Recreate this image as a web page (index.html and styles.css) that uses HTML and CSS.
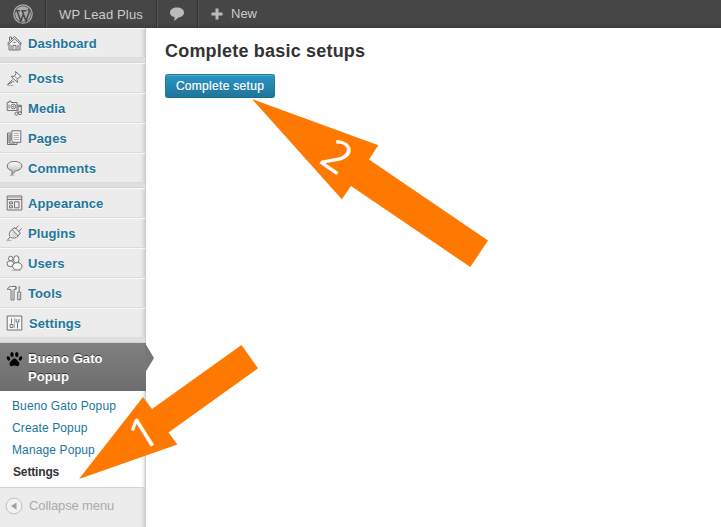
FILE: index.html
```html
<!DOCTYPE html>
<html lang="en">
<head>
<meta charset="utf-8">
<title>Complete basic setups</title>
<link rel="stylesheet" href="styles.css">
</head>
<body>
<header class="bar">
  <a class="bar-item logo"><svg width="20" height="20" viewBox="0 0 20 20"><circle cx="10" cy="10" r="9.2" fill="none" stroke="#aaa" stroke-width="1.3"/><circle cx="10" cy="10" r="7.8" fill="#aaa"/><path d="M2.5 6.7h4.6M8.4 6.7h5M4 6.7l3.8 10.5L10.4 10M9.3 6.900l3.700 10.200 3.200-9c.4-1.500-.8-2-1-3.200" fill="none" stroke="#464646" stroke-width="1.5"/></svg></a>
  <a class="bar-item site">WP Lead Plus</a>
  <a class="bar-item talk"><svg width="16" height="16" viewBox="0 0 16 16"><path d="M8 1.500c4 0 7 2 7 5s-2.600 4.800-5.500 5L5.300 15l.2-3.900C2.700 10.500 1 9 1 6.500c0-3 3-5 7-5z" fill="#bbb"/></svg></a>
  <a class="bar-item new"><svg width="12" height="12" viewBox="0 0 12 12"><path d="M4.500 .5h3v4h4v3h-4v4h-3v-4h-4v-3h4z" fill="#bbb"/></svg>New</a>
</header>
<div class="layout">
  <nav class="menu">
    <a class="row"><svg class="ico" viewBox="0 0 16 16"><path d="M2.500 8v7h11V8M.8 8.500L8 1.500l7.200 7M3 5.500V2h2v2M1.200 10L8 3.800l6.800 6.200M6.500 15v-4.500h3V15M7 7.500h2M4.500 10v4M11.500 10v4"/></svg><span>Dashboard</span></a>
    <div class="sep"></div>
    <a class="row"><svg class="ico" viewBox="0 0 16 16"><path class="shade" d="M9 1.500l5.700 5.200-2 .4-2 2.300.2 3-6.300-6 3.200-.1 1.700-2.600z"/><path d="M6 9.500l-5 5.200 6.500-3.700M8.500 6.500l2.400 2.400"/><path class="lite" d="M1 15.500h6"/></svg><span>Posts</span></a>
    <a class="row"><svg class="ico" viewBox="0 0 16 16"><path class="shade" d="M.7 2.500h1.800V1.200h2v1.300h6v8H.7z"/><path d="M10.500 5.200h4.300v8M11.500 7v6.500M14.500 6.500h-3"/><circle cx="6.800" cy="6.500" r="2.400"/><circle cx="6.800" cy="6.500" r=".7"/><circle cx="10" cy="13.700" r="1.500"/><circle cx="13.500" cy="13.200" r="1.500"/><path d="M2.500 4.500v4"/></svg><span>Media</span></a>
    <a class="row"><svg class="ico" viewBox="0 0 16 16"><path d="M4.500 3H1v11.500h9.500v-2M2.500 4.500V13h6M3.700 4v7.700"/><path class="shade" d="M5.300.8h9v11.500H6.800l-1.500-2z"/><path class="lite" d="M7 3.500h5.500M7 5.500h5.500M7 7.500h5.500M7 9.500h5.500"/></svg><span>Pages</span></a>
    <a class="row"><svg class="ico" viewBox="0 0 16 16"><defs><linearGradient id="bubble" x2="0" y2="1"><stop stop-color="#fff"/><stop offset="1" stop-color="#b0b0b0"/></linearGradient></defs><path d="M8 1.500c4.200 0 7.300 1.700 7.300 4.500S12.500 10.500 9 10.700c-1 1.500-2.300 3.300-4 3.800.6-1.200.6-2.500.3-4C2.500 10 .8 8.500.8 6 .8 3.200 3.800 1.500 8 1.500z" fill="url(#bubble)"/><path class="lite" d="M3 15.300h5"/></svg><span>Comments</span></a>
    <div class="sep"></div>
    <a class="row"><svg class="ico" viewBox="0 0 16 16"><path d="M.7 1h14.600v14H.7zM.7 4.500h14.600M3 6.800h3v2H3zM3 10.800h3v2H3zM8 6.800h4.500v6H8z"/><path class="lite" d="M1.500 2.700h13"/></svg><span>Appearance</span></a>
    <a class="row"><svg class="ico" viewBox="0 0 16 16"><path class="shade" d="M5.500 4.500l6.200 6.500c-2.200 2.200-5.200 2.500-7.200 1.500l-1.200-1.300c-1-2-.4-4.600 2.200-6.700z"/><path d="M5.500 4.500l3-2 5.300 5.500-2.100 3M8.500 4l3.500-3.200M11.500 7l3.800-3.500M3.700 12L.8 15.300"/><path class="lite" d="M5.500 6.500l4 4.500M4.500 8.500l3.500 3.500M0 15.500h5"/></svg><span>Plugins</span></a>
    <a class="row"><svg class="ico" viewBox="0 0 16 16"><g class="shade"><circle cx="4.200" cy="3.500" r="2.200"/><ellipse cx="3.800" cy="8.700" rx="3.300" ry="2.900"/><ellipse cx="9.800" cy="4.300" rx="2.700" ry="3.600"/><ellipse cx="10.800" cy="11.300" rx="4.800" ry="3.700"/></g><path class="lite" d="M5 15.600h9"/></svg><span>Users</span></a>
    <a class="row"><svg class="ico" viewBox="0 0 16 16"><path class="shade" d="M.8 4.500c.7-2 2-3 4-3h4.700v2.800H7.500V15h-3V4.500c-1.500-.4-2.700-.4-3.700 0zM11.200 7.200h3v7.500h-3z"/><path d="M12.700 1v6M9.500 2v2"/><path class="lite" d="M6 5v9M12.700 9v5"/></svg><span>Tools</span></a>
    <a class="row settings"><svg class="ico" viewBox="0 0 16 16"><path class="shade" d="M.7 1h14.600v14H.7z"/><path d="M5 3.500v5M3.600 9.500h2.800v3H3.600zM11 8v5.500M9.600 4v3h2.800V4"/><path class="lite" d="M8 3v10"/></svg><span>Settings</span></a>
    <div class="sep"></div>
    <a class="row current"><svg class="paw" viewBox="0 0 16 16"><ellipse cx="5.500" cy="3.500" rx="1.700" ry="2.600"/><ellipse cx="10.300" cy="3.500" rx="1.700" ry="2.600"/><ellipse cx="2" cy="7.400" rx="1.600" ry="2.300" transform="rotate(-25 2 7.400)"/><ellipse cx="14" cy="7.400" rx="1.600" ry="2.300" transform="rotate(25 14 7.400)"/><path d="M8 7.500c2 0 2.500 2 4 3.300 1.600 1.500 1 4.400-1.200 4.400-1.200 0-1.800-.6-2.800-.6s-1.600.6-2.800.6C3 15.200 2.400 12.300 4 10.800c1.500-1.300 2-3.300 4-3.300z"/></svg><span>Bueno Gato Popup</span><i class="nose"></i></a>
    <div class="sub"><a>Bueno Gato Popup</a><a>Create Popup</a><a>Manage Popup</a><a class="on">Settings</a></div>
    <a class="collapse"><svg width="18" height="18" viewBox="0 0 18 18"><circle cx="9" cy="9" r="7.900" fill="#f2f2f2" stroke="#c0c0c0"/><path d="M11.500 5.500v7L6 9z" fill="#a0a0a0"/></svg><span>Collapse menu</span></a>
  </nav>
  <main class="content">
    <h1>Complete basic setups</h1>
    <button class="primary">Complete setup</button>
  </main>
</div>
<svg class="notes" width="721" height="527" viewBox="0 0 721 527">
  <path d="M252 99L378.300 145.300 369 159.500 488 240.500 470.300 267 351 186 341.800 199.300z"/>
  <path d="M79 479L143 397 152 409 241.500 345 258 368.300 168.500 432.500 177.300 444.500z"/>
  <text transform="translate(318 162) rotate(35)">2</text>
  <text transform="translate(141 453) rotate(-32)">1</text>
</svg>
</body>
</html>
```
FILE: styles.css
```css
* { box-sizing: border-box; }
body { margin: 0; width: 721px; height: 527px; overflow: hidden; position: relative; background: #fff; font-family: "Liberation Sans", Arial, sans-serif; color: #333; }
.bar { display: flex; height: 28px; background: linear-gradient(#464646 80%, #3d3d3d); color: #ccc; font-size: 13px; line-height: 28px; }
.bar-item { display: flex; align-items: center; border-right: 1px solid #333; box-shadow: 1px 0 #555; }
.logo { width: 46px; padding-left: 13px; }
.site { width: 111px; padding: 1px 0 0 13px; letter-spacing: .15px; }
.talk { width: 41px; padding-left: 12px; }
.new { border: 0; box-shadow: none; padding-left: 13px; gap: 8px; }
.layout { display: flex; height: 499px; }
.menu { width: 146px; background: #ececec; box-shadow: inset -5px 0 4px -4px #c4c4c4; border-right: 1px solid #ccc; }
.row { display: flex; height: 30px; padding: 8px 0 0 6px; border-bottom: 1px solid #dadada; box-shadow: inset 0 1px #f9f9f9; font-size: 13px; font-weight: bold; line-height: 16px; letter-spacing: .1px; color: #21759b; text-shadow: 0 1px #fff; }
.ico { flex: none; width: 17px; height: 16px; margin: -1px 5px 0 0; fill: none; stroke: #707070; stroke-width: 1; }
.lite { stroke: #b4b4b4; }
.shade { fill: #f6f6f6; }
.settings span { margin-left: 1px; }
.sep { height: 5px; background: #dfdfdf; border-bottom: 1px solid #d2d2d2; }
.current { position: relative; height: 48px; padding-top: 7px; line-height: 18px; color: #fff; background: linear-gradient(#808080, #6d6d6d); border: 0; box-shadow: none; text-shadow: 0 -1px #333; width: 146px; }
.current span { width: 90px; }
.paw { flex: none; width: 17px; height: 16px; margin: 1px 5px 0 0; fill: #000; }
.nose { position: absolute; left: 145px; top: 0; width: 9px; height: 30px; background: #777; clip-path: polygon(0 0, 100% 50%, 0 100%); }
.sub { height: 97px; padding: 4px 0 0 12px; background: #fff; border-bottom: 1px solid #d4d4d4; box-shadow: inset -4px 0 4px -4px #bbb; font-size: 12px; line-height: 22px; color: #21759b; }
.sub a { display: block; letter-spacing: .12px; }
.sub .on { margin-left: 1px; font-weight: bold; color: #333; letter-spacing: -.15px; }
.collapse { display: flex; align-items: center; height: 35px; padding-left: 5px; gap: 6px; font-size: 13px; letter-spacing: -.12px; color: #aaa; }
.content { padding: 13px 0 0 19px; }
h1 { margin: 0; font-size: 18px; line-height: 20px; letter-spacing: .2px; }
.primary { display: block; width: 110px; height: 24px; margin-top: 13px; padding: 0; border: 1px solid #21759b; border-bottom-color: #1e6a8d; border-radius: 3px; background: linear-gradient(#2a95c5, #21759b); box-shadow: inset 0 1px rgba(120,200,230,.5); color: #fff; font: 12px "Liberation Sans", Arial, sans-serif; letter-spacing: .3px; text-shadow: 0 1px rgba(0,0,0,.1); -webkit-text-stroke: .2px #fff; }
.notes { position: absolute; left: 0; top: 0; fill: #ff7800; }
.notes text { fill: #fff; font: 44px "Open Sans", sans-serif; }
```
